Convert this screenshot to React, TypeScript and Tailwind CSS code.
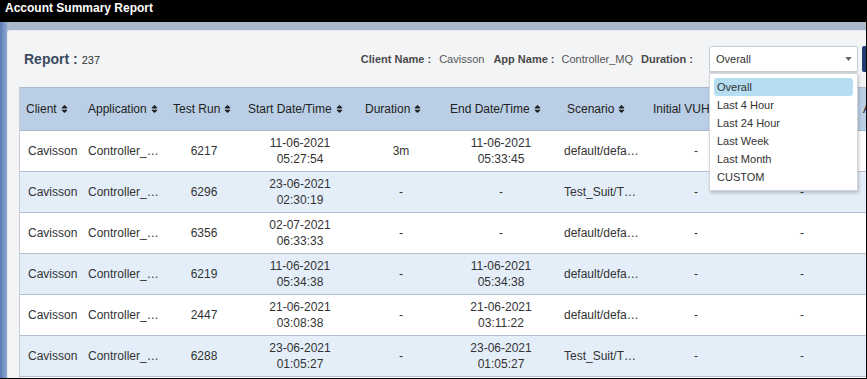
import React from "react";

const cols = "grid grid-cols-[61px_83px_80px_112px_90px_110px_90px_100px_112px_100px]";

function SortIcon() {
  return (
    <svg viewBox="0 0 320 512" className="ml-[4px] inline-block h-[10px] w-[7px] shrink-0 fill-[#222]">
      <path d="M41 288h238c21.4 0 32.1 25.9 17 41L177 448c-9.4 9.4-24.6 9.4-33.9 0L24 329c-15.1-15.1-4.4-41 17-41zm255-105L177 64c-9.4-9.4-24.6-9.4-33.9 0L24 183c-15.1 15.1-4.4 41 17 41h238c21.4 0 32.1-25.9 17-41z" />
    </svg>
  );
}

const headers = [
  { label: "Client", pad: "pl-[6px]" },
  { label: "Application", pad: "pl-[7px]" },
  { label: "Test Run", pad: "pl-[9px]" },
  { label: "Start Date/Time", pad: "pl-[4px]" },
  { label: "Duration", pad: "pl-[9px]" },
  { label: "End Date/Time", pad: "pl-[4px]" },
  { label: "Scenario", pad: "pl-[11px]" },
  { label: "Initial VUH", pad: "pl-[7px]" },
  { label: "Final VUH", pad: "pl-[20px]" },
  { label: "Avg VUH", pad: "pl-[5px]" },
];

type Row = {
  run: string;
  start: [string, string];
  duration: string;
  end: [string, string] | null;
  scenario: string;
};

const rows: Row[] = [
  { run: "6217", start: ["11-06-2021", "05:27:54"], duration: "3m", end: ["11-06-2021", "05:33:45"], scenario: "default/default/default" },
  { run: "6296", start: ["23-06-2021", "02:30:19"], duration: "-", end: null, scenario: "Test_Suit/TC_MQ_Flow" },
  { run: "6356", start: ["02-07-2021", "06:33:33"], duration: "-", end: null, scenario: "default/default/default" },
  { run: "6219", start: ["11-06-2021", "05:34:38"], duration: "-", end: ["11-06-2021", "05:34:38"], scenario: "default/default/default" },
  { run: "2447", start: ["21-06-2021", "03:08:38"], duration: "-", end: ["21-06-2021", "03:11:22"], scenario: "default/default/default" },
  { run: "6288", start: ["23-06-2021", "01:05:27"], duration: "-", end: ["23-06-2021", "01:05:27"], scenario: "Test_Suit/TC_MQ_Flow" },
  { run: "6301", start: ["24-06-2021", "04:12:10"], duration: "-", end: null, scenario: "default/default/default" },
];

const options = ["Overall", "Last 4 Hour", "Last 24 Hour", "Last Week", "Last Month", "CUSTOM"];

function DateCell({ value }: { value: [string, string] | null }) {
  if (!value) return <div className="flex items-center justify-center">-</div>;
  return (
    <div className="flex flex-col items-center justify-center leading-[16px]">
      <span>{value[0]}</span>
      <span>{value[1]}</span>
    </div>
  );
}

export default function App() {
  return (
    <div className="flex h-[379px] w-[867px] flex-col overflow-hidden border-r border-b border-black bg-[#a9b7cb] font-['Liberation_Sans',Arial,sans-serif]">
      <div className="h-[22px] shrink-0 bg-black pl-[5px] pt-[1px] text-[12px] font-bold leading-[15px] text-white">
        Account Summary Report
      </div>

      <div className="flex min-h-0 flex-1">
        <div className="w-[7px] shrink-0 bg-gradient-to-r from-[#5b7db5] to-[#8fa9d0]" />

        <div className="mt-[8px] w-[880px] shrink-0 rounded-tl-[3px] border-l border-t border-[#e6ebf1] bg-[#f3f4f6]">
          {/* report header + filters */}
          <div className="flex items-center pl-[16px] pr-[1px] pt-[15px]">
            <div className="flex items-baseline">
              <span className="text-[14px] font-bold text-[#3b4a5e]">Report :</span>
              <span className="ml-[4px] text-[11px] text-[#333]">237</span>
            </div>

            <div className="ml-auto flex items-center text-[11px]">
              <span className="mr-[8px] font-bold text-[#4a4a4a]">Client Name :</span>
              <span className="mr-[9px] text-[#555]">Cavisson</span>
              <span className="mr-[7px] font-bold text-[#4a4a4a]">App Name :</span>
              <span className="mr-[8px] text-[#555]">Controller_MQ</span>
              <span className="font-bold text-[#4a4a4a]">Duration :</span>

              <div className="relative ml-[16px]">
                <div className="flex h-[26px] w-[149px] items-center justify-between rounded-[2px] border border-[#c6ced8] bg-white pl-[6px] pr-[5px] text-[#333] shadow-[0_1px_1px_rgba(0,0,0,0.15)]">
                  <span>Overall</span>
                  <svg viewBox="0 0 8 5" className="h-[4px] w-[7px] fill-[#666]">
                    <path d="M0 0h8L4 5z" />
                  </svg>
                </div>

                <div className="absolute left-0 top-[27px] z-10 w-[149px] border border-[#d2d6db] bg-white px-[4px] py-[4px] shadow-[1px_2px_3px_rgba(0,0,0,0.2)]">
                  {options.map((o, i) => (
                    <div
                      key={o}
                      className={
                        i === 0
                          ? "flex h-[18px] items-center rounded-[3px] bg-[#b5def3] pl-[3px] text-[#333]"
                          : "flex h-[18px] items-center pl-[3px] text-[#333]"
                      }
                    >
                      {o}
                    </div>
                  ))}
                </div>
              </div>

              <div className="ml-[4px] h-[26px] w-[24px] rounded-[2px] bg-[#1f3d6f]" />
            </div>
          </div>

          {/* table */}
          <div className="ml-[11px] mt-[15px] border-l border-[#c3cbd6] text-[12px] text-[#333]">
            <div className={`${cols} h-[44px] border-t border-b border-[#a9b9cc] bg-[#bacfe5] text-[#222]`}>
              {headers.map((h) => (
                <div key={h.label} className={`flex items-center whitespace-nowrap ${h.pad}`}>
                  {h.label}
                  <SortIcon />
                </div>
              ))}
            </div>

            {rows.map((r, i) => (
              <div
                key={r.run}
                className={`${cols} h-[41px] border-b border-[#b3c0d2] ${i % 2 === 0 ? "bg-white" : "bg-[#e4eef9]"}`}
              >
                <div className="flex items-center pl-[8px]">Cavisson</div>
                <div className="flex min-w-0 items-center pl-[7px] pr-[4px]">
                  <span className="truncate">Controller_MQ</span>
                </div>
                <div className="flex items-center justify-center">{r.run}</div>
                <DateCell value={r.start} />
                <div className="flex items-center justify-center">{r.duration}</div>
                <DateCell value={r.end} />
                <div className="flex min-w-0 items-center pl-[8px] pr-[4px]">
                  <span className="truncate">{r.scenario}</span>
                </div>
                <div className="flex items-center justify-center">-</div>
                <div className="flex items-center justify-center">-</div>
                <div className="flex items-center justify-center">-</div>
              </div>
            ))}
          </div>
        </div>
      </div>
    </div>
  );
}
